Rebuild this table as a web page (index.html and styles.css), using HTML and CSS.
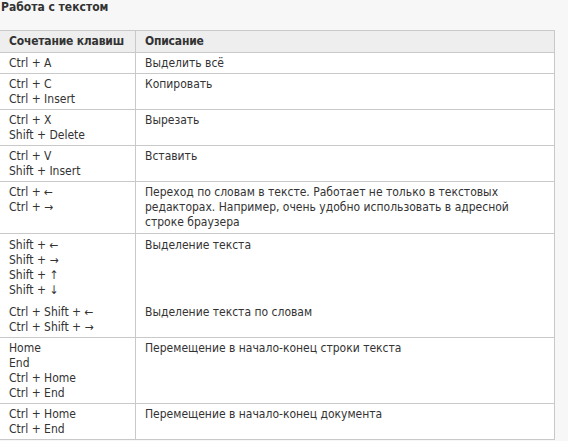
FILE: index.html
```html
<!DOCTYPE html>
<html lang="ru">
<head>
<meta charset="utf-8">
<title>Работа с текстом</title>
<link rel="stylesheet" href="styles.css">
</head>
<body>
<h3 class="title">Работа с текстом</h3>
<table class="keys">
  <thead>
    <tr><th class="c1">Сочетание клавиш</th><th>Описание</th></tr>
  </thead>
  <tbody>
    <tr><td>Ctrl + A</td><td>Выделить всё</td></tr>
    <tr><td>Ctrl + C<br>Ctrl + Insert</td><td>Копировать</td></tr>
    <tr><td>Ctrl + X<br>Shift + Delete</td><td>Вырезать</td></tr>
    <tr><td>Ctrl + V<br>Shift + Insert</td><td>Вставить</td></tr>
    <tr class="roomy"><td>Ctrl + ←<br>Ctrl + →</td><td>Переход по словам в тексте. Работает не только в текстовых редакторах. Например, очень удобно использовать в адресной строке браузера</td></tr>
    <tr class="split-top"><td>Shift + ←<br>Shift + →<br>Shift + ↑<br>Shift + ↓</td><td>Выделение текста</td></tr>
    <tr class="split-bottom"><td>Ctrl + Shift + ←<br>Ctrl + Shift + →</td><td>Выделение текста по словам</td></tr>
    <tr><td>Home<br>End<br>Ctrl + Home<br>Ctrl + End</td><td>Перемещение в начало-конец строки текста</td></tr>
    <tr><td>Ctrl + Home<br>Ctrl + End</td><td>Перемещение в начало-конец документа</td></tr>
  </tbody>
</table>
</body>
</html>
```
FILE: styles.css
```css
html, body {
  margin: 0;
  padding: 0;
  background: #f7f7f7;
}
body {
  font-family: "DejaVu Sans Condensed", "DejaVu Sans", sans-serif;
  font-stretch: condensed;
  font-size: 12px;
  line-height: 15px;
  color: #333333;
}
.title {
  margin: 0;
  padding: 0 0 0 1px;
  font-size: 12px;
  font-weight: bold;
  line-height: 15px;
  height: 30px;
  color: #333333;
}
.keys {
  border-collapse: collapse;
  width: 555px;
  background: #ffffff;
  table-layout: fixed;
}
.keys th,
.keys td {
  border: 1px solid #c9c9c9;
  padding: 3px 8px 2px 9px;
  text-align: left;
  vertical-align: top;
}
.keys th:first-child,
.keys td:first-child {
  border-left: none;
}
.keys .c1 {
  width: 118px;
}
.keys th {
  background: #eeeeee;
  font-weight: bold;
  white-space: nowrap;
  overflow: hidden;
  letter-spacing: -0.2px;
  padding-bottom: 3px;
}
.keys .roomy td {
  padding-bottom: 3px;
}
.keys .split-top td {
  border-bottom: none;
  padding-top: 4px;
  padding-bottom: 3px;
}
.keys .split-bottom td {
  border-top: none;
  padding-top: 4px;
}
```
